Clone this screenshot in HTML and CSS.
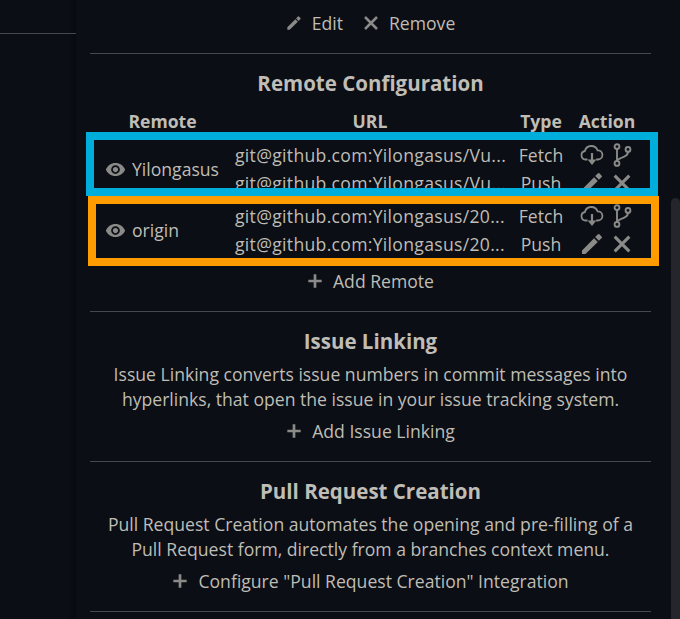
FILE: index.html
```html
<!DOCTYPE html>
<html lang="en">
<head>
    <meta charset="UTF-8">
    <title>Repository Settings</title>
    <link rel="stylesheet" href="styles.css">
</head>
<body>
    <svg class="sprites" width="0" height="0">
        <symbol id="i-edit" viewBox="0 0 24 24"><path fill="currentColor" d="M2 18.5V22h3.5L17.81 9.94l-3.75-3.75L2 18.5zM21.71 6.04a1 1 0 0 0 0-1.41l-2.34-2.34a1 1 0 0 0-1.41 0l-2.83 2.83 3.75 3.75 2.83-2.83z"/></symbol>
        <symbol id="i-close" viewBox="0 0 24 24"><path fill="none" stroke="currentColor" stroke-width="3.4" d="M4 4l16 16M20 4L4 20"/></symbol>
        <symbol id="i-plus" viewBox="0 0 24 24"><path fill="none" stroke="currentColor" stroke-width="4" d="M12 2v20M2 12h20"/></symbol>
        <symbol id="i-eye" viewBox="0 0 24 24"><path fill="currentColor" d="M12 4.5C7 4.5 2.73 7.61 1 12c1.73 4.39 6 7.5 11 7.5s9.27-3.11 11-7.5c-1.73-4.39-6-7.5-11-7.5zM12 17c-2.76 0-5-2.24-5-5s2.24-5 5-5 5 2.24 5 5-2.24 5-5 5zm0-8c-1.66 0-3 1.34-3 3s1.34 3 3 3 3-1.34 3-3-1.34-3-3-3z"/></symbol>
        <symbol id="i-fetch" viewBox="0 0 24 24"><path fill="none" stroke="currentColor" stroke-width="1.8" d="M7.5 16.5H5.5a4.3 4.3 0 0 1-.6-8.5 6.6 6.6 0 0 1 12.6-.7 4.6 4.6 0 0 1 .6 9.2h-2"/><path fill="none" stroke="currentColor" stroke-width="2.2" d="M12 10v8"/><path fill="currentColor" d="M7.6 16.4h8.8L12 22z"/></symbol>
        <symbol id="i-branch" viewBox="0 0 24 24"><g fill="none" stroke="currentColor" stroke-width="1.9"><circle cx="7" cy="3.6" r="2.4"/><circle cx="7" cy="20.4" r="2.4"/><circle cx="18" cy="6.4" r="2.4"/><path d="M7 6v12M18 8.8c0 5-4.5 4.6-7.5 6.4-2 1.2-3.5 1.5-3.5 2.8"/></g></symbol>
    </svg>

    <div class="page">
        <aside class="side">
            <div class="side-line"></div>
        </aside>

        <main class="settings">
            <section class="block block-top">
                <div class="actions">
                    <a class="action"><svg class="icon"><use href="#i-edit"/></svg>Edit</a>
                    <a class="action"><svg class="icon icon-x"><use href="#i-close"/></svg>Remove</a>
                </div>
            </section>

            <section class="block">
                <h2 class="remotes-title">Remote Configuration</h2>
                <div class="remotes">
                    <div class="remote-head">
                        <div>Remote</div>
                        <div class="url-head">URL</div>
                        <div>Type</div>
                        <div>Action</div>
                    </div>
                    <div class="remote-row">
                        <div class="remote-name"><svg class="eye"><use href="#i-eye"/></svg>Yilongasus</div>
                        <div class="url">git@github.com:Yilongasus/Vu...</div>
                        <div class="type">Fetch</div>
                        <div class="row-icons"><svg><use href="#i-fetch"/></svg><svg><use href="#i-branch"/></svg></div>
                        <div class="url">git@github.com:Yilongasus/Vu...</div>
                        <div class="type">Push</div>
                        <div class="row-icons"><svg class="pen"><use href="#i-edit"/></svg><svg class="cross"><use href="#i-close"/></svg></div>
                    </div>
                    <div class="remote-row">
                        <div class="remote-name"><svg class="eye"><use href="#i-eye"/></svg>origin</div>
                        <div class="url">git@github.com:Yilongasus/20...</div>
                        <div class="type">Fetch</div>
                        <div class="row-icons"><svg><use href="#i-fetch"/></svg><svg><use href="#i-branch"/></svg></div>
                        <div class="url">git@github.com:Yilongasus/20...</div>
                        <div class="type">Push</div>
                        <div class="row-icons"><svg class="pen"><use href="#i-edit"/></svg><svg class="cross"><use href="#i-close"/></svg></div>
                    </div>
                </div>
                <div class="actions add-remote">
                    <a class="action"><svg class="icon"><use href="#i-plus"/></svg>Add Remote</a>
                </div>
            </section>

            <section class="block">
                <h2>Issue Linking</h2>
                <p>Issue Linking converts issue numbers in commit messages into hyperlinks, that open the issue in your issue tracking system.</p>
                <div class="actions">
                    <a class="action"><svg class="icon"><use href="#i-plus"/></svg>Add Issue Linking</a>
                </div>
            </section>

            <section class="block">
                <h2>Pull Request Creation</h2>
                <p>Pull Request Creation automates the opening and pre-filling of a Pull Request form, directly from a branches context menu.</p>
                <div class="actions">
                    <a class="action"><svg class="icon"><use href="#i-plus"/></svg>Configure "Pull Request Creation" Integration</a>
                </div>
            </section>
        </main>

        <div class="scrollbar"><div class="scrollbar-thumb"></div></div>

        <!-- annotations drawn over the screenshot -->
        <div class="mark mark-blue"></div>
        <div class="mark mark-orange"></div>
    </div>
</body>
</html>
```

FILE: styles.css
```css
body {
    font-family: "Open Sans", "Noto Sans", sans-serif;
    background-color: #0b0e14;
    color: #bfbdb6;
    margin: 0;
    font-size: 17.6px;
}
.sprites {
    position: absolute;
}
.page {
    display: flex;
    position: relative;
    width: 680px;
    height: 619px;
    overflow: hidden;
}
.side {
    width: 76px;
    flex-shrink: 0;
    padding-top: 33px;
    box-sizing: border-box;
    background: linear-gradient(to right, #0b0e14 90%, #07090d 100%);
}
.side-line {
    height: 1px;
    background-color: #46484c;
}
.settings {
    width: 561px;
    margin-left: 14px;
    flex-shrink: 0;
}
.block {
    text-align: center;
    border-bottom: 1px solid #46484c;
    padding: 15px 0 16px 0;
}
.block-top {
    padding: 0;
    height: 54px;
    box-sizing: border-box;
}
h2 {
    font-size: 20.5px;
    line-height: 28px;
    font-weight: 700;
    margin: 0 0 7px 0;
}
.remotes-title {
    margin-bottom: 12px;
}
p {
    margin: 0 0 5px 0;
    padding: 0 10px;
    line-height: 25px;
}
.actions {
    display: flex;
    justify-content: center;
    gap: 20px;
    line-height: 28px;
}
.block-top .actions {
    padding-top: 9px;
}
.action {
    display: flex;
    align-items: center;
    gap: 10px;
}
.icon {
    width: 16px;
    height: 16px;
    color: #8a8a88;
}
.icon-x {
    width: 18px;
    height: 18px;
    margin: 0 -1px;
}
.remote-head, .remote-row {
    display: grid;
    grid-template-columns: 145px 275px 62px 70px;
    align-items: center;
    text-align: center;
    line-height: 28px;
}
.remote-head {
    font-weight: 700;
    margin-bottom: 6px;
    margin-top: -2px;
}
.url-head {
    padding-right: 5px;
}
.remote-row {
    margin-bottom: 5px;
}
.remote-name {
    grid-row: span 2;
    display: flex;
    align-items: center;
    gap: 6px;
    padding-left: 15px;
}
.url {
    white-space: nowrap;
    text-align: left;
    letter-spacing: 0.3px;
}
.eye {
    width: 21px;
    height: 21px;
    color: #8a8a88;
}
.row-icons {
    display: flex;
    justify-content: center;
    align-items: center;
    gap: 6px;
    color: #8a8a88;
}
.row-icons svg {
    width: 24px;
    height: 24px;
}
.row-icons .cross {
    width: 22px;
    height: 22px;
    margin: 0 1px;
}
.add-remote {
    margin-top: 9px;
}
.scrollbar {
    flex: 1;
    position: relative;
}
.scrollbar-thumb {
    position: absolute;
    left: 20px;
    top: 198px;
    bottom: -4px;
    width: 9px;
    border-radius: 5px;
    background-color: #24262c;
}
.mark {
    position: absolute;
    box-sizing: border-box;
    border-width: 8px;
    border-style: solid;
}
.mark-blue {
    left: 86px;
    top: 132px;
    width: 572px;
    height: 64px;
    border-color: #00aedb;
}
.mark-orange {
    left: 88px;
    top: 196px;
    width: 571px;
    height: 70px;
    border-color: #ff9d00;
}
```
